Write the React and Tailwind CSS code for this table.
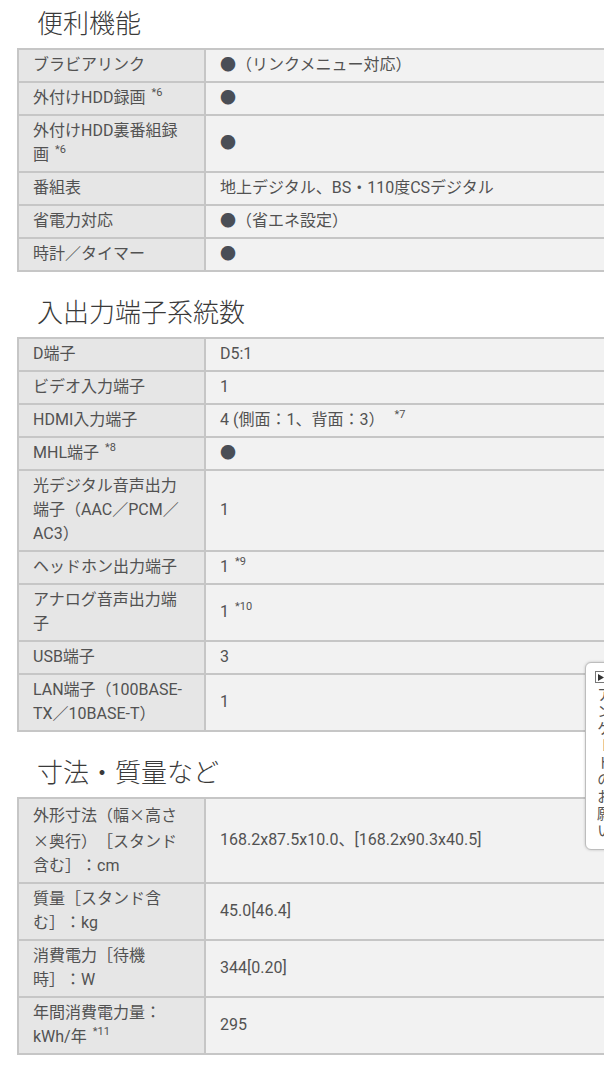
import React from "react";

const Dot = () => <span className="text-[#4a4e56]">●</span>;

const Sup = ({ children }) => (
  <span className="relative -top-[7px] ml-[6px] align-baseline text-[11px] leading-none">{children}</span>
);

// full-width multiplication sign, as the Japanese font draws it
const X = () => <span style={{ fontFamily: '"Noto Sans CJK JP", sans-serif' }}>×</span>;

const sections = [
  {
    title: "便利機能",
    rows: [
      ["ブラビアリンク", <><Dot />（リンクメニュー対応）</>],
      [<>外付けHDD録画<Sup>*6</Sup></>, <Dot />],
      [<>外付けHDD裏番組録画<Sup>*6</Sup></>, <Dot />],
      ["番組表", "地上デジタル、BS・110度CSデジタル"],
      ["省電力対応", <><Dot />（省エネ設定）</>],
      ["時計／タイマー", <Dot />],
    ],
  },
  {
    title: "入出力端子系統数",
    rows: [
      ["D端子", "D5:1"],
      ["ビデオ入力端子", "1"],
      ["HDMI入力端子", <>4 (側面：1、背面：3） <Sup>*7</Sup></>],
      [<>MHL端子<Sup>*8</Sup></>, <Dot />],
      ["光デジタル音声出力端子（AAC／PCM／AC3）", "1"],
      ["ヘッドホン出力端子", <>1<Sup>*9</Sup></>],
      ["アナログ音声出力端子", <>1<Sup>*10</Sup></>],
      ["USB端子", "3"],
      ["LAN端子（100BASE-TX／10BASE-T）", "1"],
    ],
  },
  {
    title: "寸法・質量など",
    rows: [
      [<>外形寸法（幅<X />高さ<X />奥行）［スタンド含む］：cm</>, "168.2x87.5x10.0、[168.2x90.3x40.5]"],
      ["質量［スタンド含む］：kg", "45.0[46.4]"],
      ["消費電力［待機時］：W", "344[0.20]"],
      [<>年間消費電力量：kWh/年<Sup>*11</Sup></>, "295"],
    ],
  },
];

const SpecTable = ({ title, rows, first }) => (
  <section className={first ? "pt-[8px]" : "pt-[25px]"}>
    <h2 className="mb-[8px] pl-[37px] text-[26px] leading-[32px] font-light text-[#3a3a3a]">{title}</h2>
    <table className="ml-[17px] w-[610px] border-collapse border-2 border-[#c6c6c6] text-[16px] leading-[24px] text-[#525252]">
      <tbody>
        {rows.map((r, i) => (
          <tr key={i}>
            <th className="w-[187px] border-2 border-[#c6c6c6] bg-[#e6e6e6] px-[14px] pt-[3px] pb-[4px] text-left align-middle font-normal">
              {r[0]}
            </th>
            <td className="border-2 border-[#c6c6c6] bg-[#f2f2f2] px-[14px] pt-[3px] pb-[4px] align-middle">{r[1]}</td>
          </tr>
        ))}
      </tbody>
    </table>
  </section>
);

export default function App() {
  return (
    <div
      className="relative h-[1080px] w-[604px] overflow-hidden bg-white [text-spacing-trim:space-all]"
      style={{ fontFamily: 'Roboto, "Noto Sans CJK JP", sans-serif' }}
    >
      {sections.map((s, i) => (
        <SpecTable key={i} title={s.title} rows={s.rows} first={i === 0} />
      ))}

      {/* アンケート tab */}
      <div className="absolute left-[585px] top-[662px] flex h-[188px] w-[30px] flex-col items-start rounded-l-[6px] border border-[#bdbdbd] bg-white pt-[8px] pl-[9px] shadow-[0_0_3px_rgba(0,0,0,0.2)]">
        <div className="flex h-[12px] w-[12px] items-center justify-center border border-[#777] bg-white">
          <svg width="6" height="7" viewBox="0 0 6 7">
            <path d="M0 0 L6 3.5 L0 7 Z" fill="#333" />
          </svg>
        </div>
        <div className="mt-[4px] text-[15px] leading-[16px] tracking-[2px] text-[#555] [writing-mode:vertical-rl]">
          アンケートのお願い
        </div>
      </div>
    </div>
  );
}
